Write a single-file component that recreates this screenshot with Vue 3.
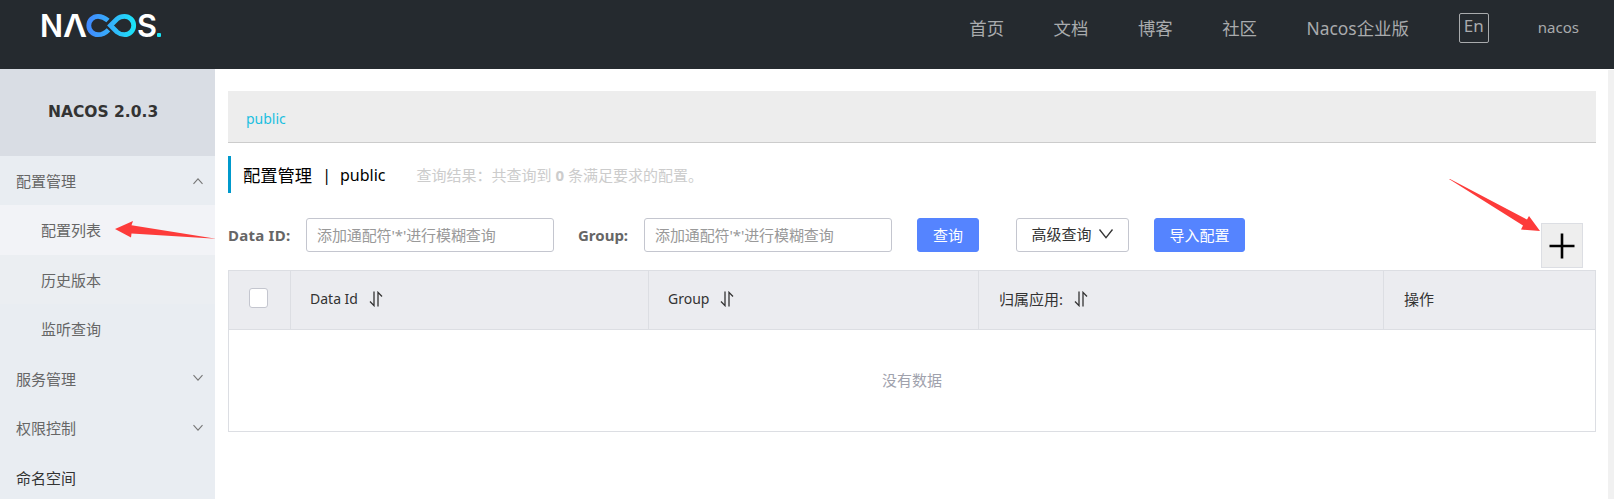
<script setup>
const nav = ['首页', '文档', '博客', '社区', 'Nacos企业版']
const menu = [
  { text: '配置管理', arrow: 'up' },
  { text: '配置列表', sub: true, active: true },
  { text: '历史版本', sub: true, alt: true },
  { text: '监听查询', sub: true },
  { text: '服务管理', arrow: 'down' },
  { text: '权限控制', arrow: 'down' },
  { text: '命名空间', dark: true },
]
const columns = [
  { text: 'Data Id', latin: true, sort: true },
  { text: 'Group', latin: true, sort: true },
  { text: '归属应用:', sort: true },
  { text: '操作' },
]
</script>

<template>
  <div class="page">
    <header class="header">
      <svg class="logo" width="128" height="48" viewBox="0 -8 128 48">
        <defs>
          <linearGradient id="ring" gradientUnits="userSpaceOnUse" x1="46" y1="0" x2="96" y2="0">
            <stop offset="0" stop-color="#4286ff" />
            <stop offset="0.5" stop-color="#35b1fb" />
            <stop offset="1" stop-color="#19e6f7" />
          </linearGradient>
        </defs>
        <g class="logo-text">
          <text x="0" y="27" textLength="23" lengthAdjust="spacingAndGlyphs">N</text>
          <text x="23" y="27" textLength="24" lengthAdjust="spacingAndGlyphs">Λ</text>
          <text x="97" y="27" textLength="20" lengthAdjust="spacingAndGlyphs">S</text>
        </g>
        <g fill="none" stroke="url(#ring)" stroke-width="4.8">
          <path d="M68 10.5 C64 7 61 6.3 58 6.3 A9.2 9.2 0 0 0 58 24.7 C62 24.7 65 23.5 68.5 19.8" />
          <path d="M70.5 15.5 L77 9 C79.5 6.8 82 6.3 84.5 6.3 A9.2 9.2 0 0 1 84.5 24.7 C82 24.7 79.5 24 77 22 Z" />
        </g>
        <rect x="117" y="23" width="4" height="4" rx="1" fill="#19e6f7" />
      </svg>
      <nav class="nav">
        <a v-for="n in nav" :key="n">{{ n }}</a>
      </nav>
      <span class="lang">En</span>
      <span class="user">nacos</span>
    </header>

    <div class="body">
      <aside class="side">
        <h1 class="version">NACOS 2.0.3</h1>
        <ul class="menu">
          <li v-for="m in menu" :key="m.text" :class="{ sub: m.sub, active: m.active, alt: m.alt, dark: m.dark }">
            <span>{{ m.text }}</span>
            <svg v-if="m.arrow" :class="m.arrow" width="12" height="8" viewBox="0 0 12 8">
              <path d="M1.5 1.2 L6 6.2 L10.5 1.2" fill="none" stroke="#777" stroke-width="1.1" />
            </svg>
          </li>
        </ul>
      </aside>

      <main class="main">
        <div class="namespace">public</div>
        <div class="title">
          <span>配置管理</span><i class="bar">|</i><span class="ns">public</span>
          <span class="result">查询结果：共查询到 <b>0</b> 条满足要求的配置。</span>
        </div>

        <div class="filters">
          <label class="l1">Data ID:</label>
          <input type="text" placeholder="添加通配符'*'进行模糊查询" />
          <label class="l2">Group:</label>
          <input type="text" placeholder="添加通配符'*'进行模糊查询" />
          <button class="btn primary query">查询</button>
          <button class="btn more">
            高级查询
            <svg width="16" height="12" viewBox="0 0 16 12">
              <path d="M1.5 1.5 L8 9.7 L14.5 1.5" fill="none" stroke="#333" stroke-width="1.3" />
            </svg>
          </button>
          <button class="btn primary import">导入配置</button>
          <button class="add">
            <svg width="26" height="26" viewBox="0 0 26 26">
              <path d="M13 0.5 V25.5 M0.5 13 H25.5" stroke="#000" stroke-width="2.6" />
            </svg>
          </button>
        </div>

        <div class="table">
          <div class="thead">
            <div class="cell check"><i class="checkbox"></i></div>
            <div v-for="c in columns" :key="c.text" class="cell">
              <span :class="{ latin: c.latin }">{{ c.text }}</span>
              <svg v-if="c.sort" width="14" height="16" viewBox="0 0 14 16">
                <path d="M5 0.5 V14.6 L1 10.5 M9 15.5 V1.4 L13 5.5" fill="none" stroke="#333" stroke-width="1.3" />
              </svg>
            </div>
          </div>
          <div class="empty">没有数据</div>
        </div>
      </main>
      <div class="track"></div>
    </div>

    <svg class="pointer left" width="102" height="18" viewBox="0 0 102 18">
      <path d="M0 8 L18 0 L16.5 4.2 L101 17.8 L16.5 12.5 L16 16.5 Z" fill="#fd3b3a" />
    </svg>
    <svg class="pointer right" width="92" height="54" viewBox="0 0 92 54">
      <path d="M0 0 L1 0 L78 40.5 L80 37 L91 52 L72 50.5 L74 46.5 Z" fill="#fd3b3a" />
    </svg>
  </div>
</template>

<style>
body {
  overflow: hidden;
}
</style>

<style scoped>
* {
  box-sizing: border-box;
}
.page {
  position: relative;
  height: 499px;
  overflow: hidden;
  display: flex;
  flex-direction: column;
  background: #fff;
  font-family: "Noto Sans", "Noto Sans CJK SC", sans-serif;
  font-size: 15px;
  color: #333;
}
.header {
  flex: none;
  height: 69px;
  display: flex;
  align-items: flex-start;
  background: #252a2f;
  color: #a9abad;
  padding: 0 35px 0 40px;
}
.logo {
  margin-top: 2px;
}
.logo-text {
  font-family: Inter, sans-serif;
  font-weight: 600;
  font-size: 31.5px;
  fill: #fff;
}
.nav {
  margin-left: auto;
  display: flex;
  gap: 49.5px;
  font-size: 17.4px;
  line-height: 28px;
  padding-top: 14px;
}
.lang {
  width: 30px;
  height: 30px;
  margin: 13px 49px 0 50px;
  border: 1px solid #a9abad;
  border-radius: 2px;
  font-size: 17px;
  line-height: 24px;
  text-align: center;
}
.user {
  line-height: 28px;
  padding-top: 13px;
}
.body {
  flex: 1;
  display: flex;
  min-height: 0;
}
.side {
  flex: none;
  width: 215px;
  background: #e9edf2;
}
.version {
  margin: 0;
  height: 87px;
  padding-left: 48px;
  background: #d9dde4;
  font-family: "DejaVu Sans", sans-serif;
  font-size: 15.5px;
  line-height: 86px;
}
.menu {
  list-style: none;
  margin: 0;
  padding: 0;
  color: #666;
}
.menu li {
  height: 49.5px;
  padding: 0 11px 0 16px;
  display: flex;
  align-items: center;
  justify-content: space-between;
}
.menu li:first-child {
  height: 49px;
}
.menu li.sub {
  padding-left: 41px;
}
.menu li.active {
  background: #f2f3f7;
}
.menu li.alt {
  background: #ebeef2;
}
.menu li.dark {
  color: #333;
}
.up {
  transform: rotate(180deg);
}
.main {
  flex: 1;
  padding: 22px 12px 0 13px;
  display: flex;
  flex-direction: column;
}
.namespace {
  height: 52px;
  background: #ededed;
  border-bottom: 1px solid #ccc;
  padding-left: 18px;
  line-height: 55px;
  font-size: 14px;
  color: #1bbfe0;
}
.title {
  display: flex;
  align-items: center;
  height: 37px;
  margin-top: 13px;
  border-left: 3px solid #09c;
  padding-left: 12px;
  font-size: 17.3px;
  color: #000;
}
.bar {
  font-style: normal;
  margin: 0 9px 0 10px;
  font-size: 16px;
}
.ns {
  font-size: 16px;
}
.result {
  margin-left: 31px;
  font-size: 15px;
  color: #ccc;
}
.filters {
  display: flex;
  align-items: flex-start;
  height: 45px;
  margin: 25px 13px 0 0;
  line-height: 34px;
}
.filters label {
  flex: none;
  font-weight: 700;
  color: #666;
}
.l1 {
  width: 78px;
  letter-spacing: 0.25px;
}
.l2 {
  width: 66px;
  margin-left: 24px;
}
input {
  width: 248px;
  height: 34px;
  border: 1px solid #c4c6cf;
  border-radius: 3px;
  padding: 0 10px;
  font: inherit;
  line-height: normal;
  background: #fff;
}
input::placeholder {
  color: #999;
  opacity: 1;
  letter-spacing: -0.1px;
}
.btn {
  height: 34px;
  border-radius: 3px;
  padding: 0;
  font: inherit;
  line-height: 32px;
}
.primary {
  background: #5584ff;
  border: 1px solid #5584ff;
  color: #fff;
}
.query {
  width: 62px;
  margin-left: 25px;
}
.more {
  display: flex;
  align-items: center;
  justify-content: center;
  gap: 6px;
  width: 113px;
  margin: 0 25px 0 37px;
  padding-bottom: 3px;
  background: #fff;
  border: 1px solid #c4c6cf;
  color: #333;
}
.import {
  width: 91px;
}
.add {
  width: 42px;
  height: 45px;
  margin: 5px 0 0 auto;
  padding: 0;
  display: flex;
  align-items: center;
  justify-content: center;
  background: #eee;
  border: 1px solid #dcdee3;
}
.table {
  height: 162px;
  margin-top: 7px;
  border: 1px solid #dcdee3;
}
.thead {
  display: grid;
  grid-template-columns: 62px 358px 330px 405px 1fr;
  height: 59px;
  background: #ebecf0;
  border-bottom: 1px solid #dcdee3;
}
.cell {
  display: flex;
  align-items: center;
  gap: 11px;
  padding: 0 0 3px 20px;
  border-right: 1px solid #dcdee3;
}
.cell:last-child {
  border-right: 0;
}
.latin {
  font-size: 14px;
  margin-left: -1px;
}
.checkbox {
  width: 19px;
  height: 20px;
  margin-top: -1px;
  background: #fff;
  border: 1px solid #c4c6cf;
  border-radius: 3px;
}
.empty {
  line-height: 101px;
  text-align: center;
  color: #a0a2ad;
}
.track {
  width: 6px;
  margin-top: 1px;
  background: #f1f1f1;
}
.pointer {
  position: absolute;
}
.left {
  left: 115px;
  top: 221px;
}
.right {
  left: 1449px;
  top: 179px;
}
</style>
